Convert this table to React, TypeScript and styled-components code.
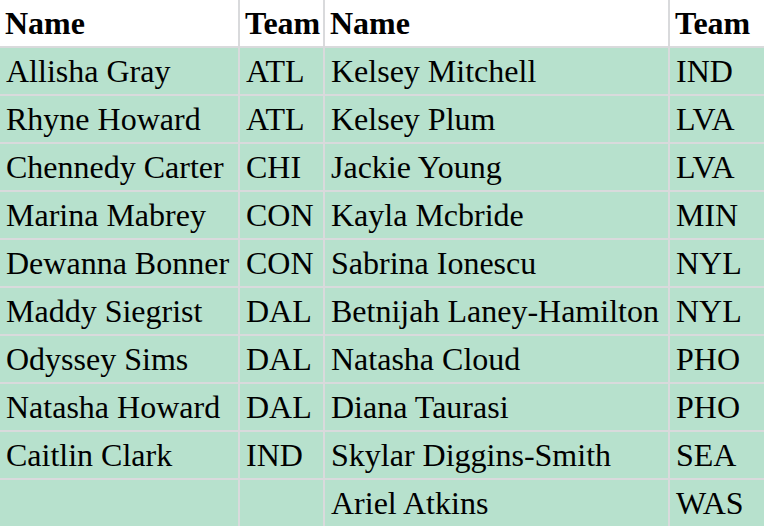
import React from "react";
import styled, { createGlobalStyle } from "styled-components";

const GlobalStyle = createGlobalStyle`
  html, body {
    margin: 0;
    padding: 0;
    background: #ffffff;
    overflow: hidden;
  }
`;

const Table = styled.table`
  border-collapse: separate;
  border-spacing: 0;
  table-layout: fixed;
  width: 800px;
  font-family: "Liberation Serif", "Times New Roman", serif;
  font-size: 32px;
  line-height: 36px;
  color: #000000;
`;

const Col = styled.col<{ $w: number }>`
  width: ${(p) => p.$w}px;
`;

const Head = styled.th<{ $last?: boolean }>`
  background: #ffffff;
  font-weight: 700;
  text-align: left;
  white-space: nowrap;
  padding: 5px 6px 5px 5px;
  border-bottom: 2px solid #d9dadc;
  border-right: ${(p) => (p.$last ? "none" : "2px solid #d9dadc")};
`;

const Cell = styled.td<{ $last?: boolean }>`
  background: #b7e1cd;
  white-space: nowrap;
  padding: 5px 6px 5px 6px;
  border-bottom: 2px solid #d9dadc;
  border-right: ${(p) => (p.$last ? "none" : "2px solid #d9dadc")};
`;

type Player = [string, string];

const left: Player[] = [
  ["Allisha Gray", "ATL"],
  ["Rhyne Howard", "ATL"],
  ["Chennedy Carter", "CHI"],
  ["Marina Mabrey", "CON"],
  ["Dewanna Bonner", "CON"],
  ["Maddy Siegrist", "DAL"],
  ["Odyssey Sims", "DAL"],
  ["Natasha Howard", "DAL"],
  ["Caitlin Clark", "IND"],
  ["", ""],
];

const right: Player[] = [
  ["Kelsey Mitchell", "IND"],
  ["Kelsey Plum", "LVA"],
  ["Jackie Young", "LVA"],
  ["Kayla Mcbride", "MIN"],
  ["Sabrina Ionescu", "NYL"],
  ["Betnijah Laney-Hamilton", "NYL"],
  ["Natasha Cloud", "PHO"],
  ["Diana Taurasi", "PHO"],
  ["Skylar Diggins-Smith", "SEA"],
  ["Ariel Atkins", "WAS"],
];

export default function App() {
  return (
    <>
      <GlobalStyle />
      <Table>
        <colgroup>
          <Col $w={240} />
          <Col $w={85} />
          <Col $w={345} />
          <Col $w={130} />
        </colgroup>
        <thead>
          <tr>
            <Head>Name</Head>
            <Head>Team</Head>
            <Head>Name</Head>
            <Head $last>Team</Head>
          </tr>
        </thead>
        <tbody>
          {left.map((l, i) => (
            <tr key={i}>
              <Cell>{l[0]}</Cell>
              <Cell>{l[1]}</Cell>
              <Cell>{right[i][0]}</Cell>
              <Cell $last>{right[i][1]}</Cell>
            </tr>
          ))}
        </tbody>
      </Table>
    </>
  );
}
